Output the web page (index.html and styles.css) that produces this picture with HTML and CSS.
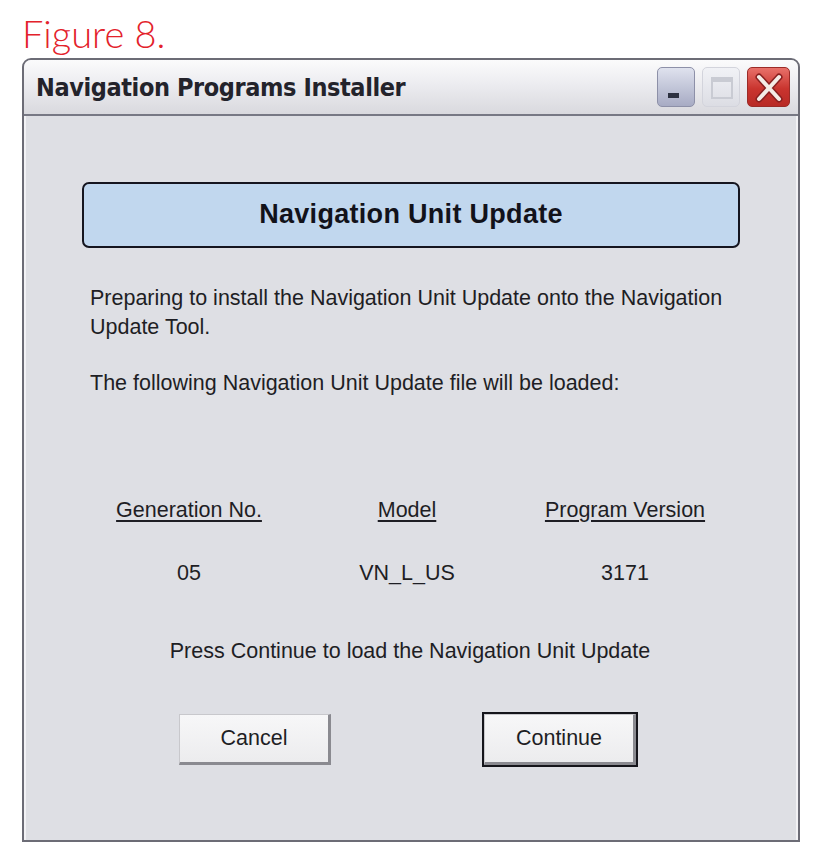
FILE: index.html
```html
<!DOCTYPE html>
<html lang="en">

<head>
    <meta charset="UTF-8">
    <meta name="viewport" content="width=device-width, initial-scale=1.0">
    <title>Navigation Programs Installer</title>
    <link rel="stylesheet" href="styles.css">
</head>

<body>
    <div class="figure-label">Figure 8.</div>

    <div class="window">
        <div class="titlebar">
            <span class="title">Navigation Programs Installer</span>
            <div class="title-buttons">
                <span class="tb-btn tb-min">
                    <svg width="38" height="40" viewBox="0 0 38 40">
                        <rect x="10" y="25" width="11" height="5" fill="#2c3040" />
                    </svg>
                </span>
                <span class="tb-btn tb-max">
                    <svg width="38" height="40" viewBox="0 0 38 40">
                        <rect x="9" y="10" width="20" height="20" fill="none" stroke="#c9cbd3" stroke-width="2" />
                        <rect x="9" y="10" width="20" height="4" fill="#c9cbd3" />
                    </svg>
                </span>
                <span class="tb-btn tb-close">
                    <svg width="42" height="40" viewBox="0 0 42 40">
                        <path d="M11 9 L31 31 M31 9 L11 31" stroke="#8a2020" stroke-width="7" stroke-linecap="round" />
                        <path d="M11 9 L31 31 M31 9 L11 31" stroke="#f4ece6" stroke-width="4" stroke-linecap="round" />
                    </svg>
                </span>
            </div>
        </div>

        <div class="client">
            <div class="banner">Navigation Unit Update</div>

            <p class="msg">Preparing to install the Navigation Unit Update onto the Navigation Update Tool.</p>
            <p class="msg">The following Navigation Unit Update file will be loaded:</p>

            <div class="file-table">
                <span class="th">Generation No.</span>
                <span class="th">Model</span>
                <span class="th">Program Version</span>
                <span class="td">05</span>
                <span class="td">VN_L_US</span>
                <span class="td">3171</span>
            </div>

            <p class="prompt">Press Continue to load the Navigation Unit Update</p>

            <div class="actions">
                <button class="btn">Cancel</button>
                <button class="btn btn-default">Continue</button>
            </div>
        </div>
    </div>
</body>

</html>
```

FILE: styles.css
```css
* {
    margin: 0;
    padding: 0;
    box-sizing: border-box;
}

body {
    background: #fff;
    font-family: "Liberation Sans", Arial, sans-serif;
    color: #1e1e24;
}

.figure-label {
    height: 58px;
    padding: 12px 0 0 22px;
    font-family: Lato, "Liberation Sans", sans-serif;
    font-weight: 300;
    font-size: 38px;
    line-height: 42px;
    color: #e3222b;
}

.window {
    width: 778px;
    height: 784px;
    margin-left: 22px;
    border: 2px solid #6c6c76;
    border-radius: 9px 9px 0 0;
    background: #dedfe4;
    display: flex;
    flex-direction: column;
}

.titlebar {
    height: 56px;
    display: flex;
    align-items: center;
    justify-content: space-between;
    padding: 0 6px 0 12px;
    border-radius: 7px 7px 0 0;
    background: linear-gradient(#fbfbfc, #ececf0 45%, #d9d9de);
    border-bottom: 2px solid #777884;
}

.title {
    font-family: "DejaVu Sans Condensed", "DejaVu Sans", sans-serif;
    font-weight: bold;
    font-size: 25px;
    color: #23232b;
    letter-spacing: -0.4px;
}

.title-buttons {
    display: flex;
    gap: 7px;
    align-items: center;
    margin-right: 2px;
}

.tb-btn {
    display: block;
    height: 40px;
    border-radius: 5px;
}

.tb-min {
    width: 38px;
    background: linear-gradient(#dfe2ee, #a7abc4);
    border: 1px solid #8d90a8;
}

.tb-max {
    width: 38px;
    background: linear-gradient(#f1f2f6, #dcdde4);
    border: 1px solid #d3d4dc;
}

.tb-close {
    width: 43px;
    background: linear-gradient(#e8716a, #c9342e 55%, #b82a26);
    border: 1px solid #9b2b27;
}

.client {
    flex: 1;
    padding: 66px 56px 0;
    border-left: 2px solid #f2f2f5;
    border-right: 2px solid #f2f2f5;
}

.banner {
    height: 66px;
    display: flex;
    align-items: center;
    justify-content: center;
    background: #c1d7ee;
    border: 2px solid #15151f;
    border-radius: 7px;
    font-weight: bold;
    font-size: 27px;
    letter-spacing: 0.3px;
    color: #12121a;
    padding-bottom: 2px;
}

.msg {
    margin: 36px 0 0 8px;
    font-size: 21.5px;
    line-height: 29px;
    width: 660px;
}

.msg + .msg {
    margin-top: 27px;
}

.file-table {
    display: grid;
    grid-template-columns: 218px 218px 218px;
    margin: 98px 0 0 -2px;
    row-gap: 34px;
    text-align: center;
    font-size: 21.5px;
    line-height: 29px;
}

.th {
    text-decoration: underline;
    text-underline-offset: 3px;
}

.prompt {
    margin-top: 49px;
    text-align: center;
    font-size: 21.5px;
    line-height: 29px;
    padding-right: 2px;
}

.actions {
    display: flex;
    gap: 153px;
    margin: 48px 0 0 97px;
}

.btn {
    width: 152px;
    height: 51px;
    font-family: "Liberation Sans", Arial, sans-serif;
    font-size: 21.5px;
    color: #1e1e24;
    background: linear-gradient(#f7f7f8, #ececee);
    border: 1px solid #c8c8cc;
    border-right: 3px solid #8a8a90;
    border-bottom: 3px solid #8a8a90;
}

.btn-default {
    outline: 2px solid #15151b;
    outline-offset: 0;
}
```
